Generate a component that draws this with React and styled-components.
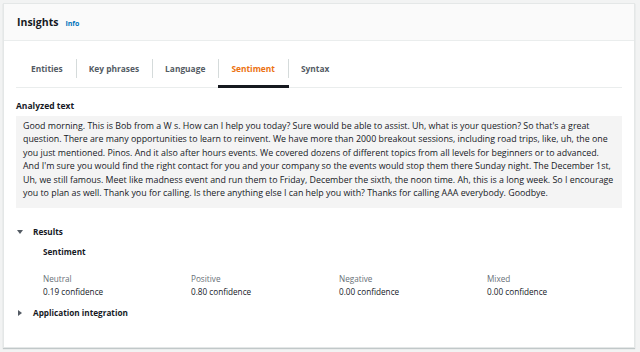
import styled, { createGlobalStyle } from "styled-components";

const GlobalStyle = createGlobalStyle`
  html, body {
    margin: 0;
    padding: 0;
    background: #f2f3f3;
  }
  body {
    font-family: "Open Sans", "Noto Sans", sans-serif;
    color: #16191f;
  }
`;

const Page = styled.div`
  padding: 3px 5px 4px 3px;
`;

const Card = styled.section`
  background: #fff;
  height: 345px;
  box-sizing: border-box;
  border: 1px solid #e4e7e7;
  box-shadow: 0 1px 1px 0 rgba(0, 28, 36, 0.2);
`;

const Header = styled.header`
  height: 37px;
  box-sizing: border-box;
  background: #fafafa;
  border-bottom: 1px solid #eaeded;
  padding: 11px 13px 0;
  display: flex;
  align-items: baseline;
  gap: 7px;
`;

const Title = styled.h2`
  margin: 0;
  font-size: 10.5px;
  font-weight: 700;
  color: #16191f;
`;

const InfoLink = styled.a`
  font-size: 7px;
  font-weight: 700;
  color: #0073bb;
  text-decoration: none;
`;

const Body = styled.div`
  padding: 0 12px;
`;

const TabList = styled.div`
  margin-top: 9px;
  display: flex;
  border-bottom: 1px solid #eaeded;
`;

const Tab = styled.div`
  position: relative;
  height: 37px;
  display: flex;
  align-items: center;
  padding: 0 13px 0 ${(p) => (p.$first ? "15px" : "13px")};
  font-size: 8.4px;
  font-weight: 700;
  color: ${(p) => (p.$active ? "#ec7211" : "#545b64")};

  &::before {
    content: "";
    display: ${(p) => (p.$first ? "none" : "block")};
    position: absolute;
    left: 0;
    top: 9px;
    height: 19px;
    width: 1px;
    background: #d5dbdb;
  }

  &::after {
    content: "";
    display: ${(p) => (p.$active ? "block" : "none")};
    position: absolute;
    left: 0;
    right: -1px;
    bottom: -1px;
    height: 3px;
    background: #16191f;
  }
`;

const FieldLabel = styled.div`
  margin-top: 12px;
  font-size: 8.5px;
  font-weight: 700;
  line-height: 12px;
  color: #16191f;
`;

const TextBox = styled.div`
  margin-top: 4px;
  background: #f4f4f4;
  padding: 4px 8px 7.6px 7px;
  font-size: 8.85px;
  line-height: 13.4px;
  color: #16191f;
`;

const TextLine = styled.span`
  display: block;
  white-space: nowrap;
`;

const Section = styled.div`
  margin-top: ${(p) => p.$top || "0px"};
`;

const Toggle = styled.div`
  display: flex;
  align-items: center;
  gap: 10px;
  padding-left: 1px;
  font-size: 8.2px;
  font-weight: 700;
  line-height: 12px;
  color: #16191f;
`;

const Caret = styled.svg`
  width: 6px;
  height: 6px;
  fill: #545b64;
  flex: none;
`;

const Panel = styled.div`
  padding-left: 27px;
`;

const PanelTitle = styled.div`
  margin-top: 8px;
  font-size: 8.2px;
  font-weight: 700;
  line-height: 12px;
`;

const Stats = styled.div`
  margin-top: 14px;
  display: grid;
  grid-template-columns: repeat(4, 148px);
`;

const StatLabel = styled.div`
  font-size: 8.2px;
  line-height: 13px;
  color: #687078;
`;

const StatValue = styled.div`
  font-size: 8.2px;
  line-height: 13px;
  color: #16191f;
`;

const tabs = ["Entities", "Key phrases", "Language", "Sentiment", "Syntax"];

const stats = [
  ["Neutral", "0.19 confidence"],
  ["Positive", "0.80 confidence"],
  ["Negative", "0.00 confidence"],
  ["Mixed", "0.00 confidence"],
];

// line breaks as they fall in the original text area
const transcript = [
  "Good morning. This is Bob from a W s. How can I help you today? Sure would be able to assist. Uh, what is your question? So that's a great",
  "question. There are many opportunities to learn to reinvent. We have more than 2000 breakout sessions, including road trips, like, uh, the one",
  "you just mentioned. Pinos. And it also after hours events. We covered dozens of different topics from all levels for beginners or to advanced.",
  "And I'm sure you would find the right contact for you and your company so the events would stop them there Sunday night. The December 1st,",
  "Uh, we still famous. Meet like madness event and run them to Friday, December the sixth, the noon time. Ah, this is a long week. So I encourage",
  "you to plan as well. Thank you for calling. Is there anything else I can help you with? Thanks for calling AAA everybody. Goodbye.",
];

function CaretDown() {
  return (
    <Caret viewBox="0 0 6 6">
      <polygon points="0,1 6,1 3,5" />
    </Caret>
  );
}

function CaretRight() {
  return (
    <Caret viewBox="0 0 6 6">
      <polygon points="1,0 5,3 1,6" />
    </Caret>
  );
}

export default function App() {
  return (
    <>
      <GlobalStyle />
      <Page>
        <Card>
          <Header>
            <Title>Insights</Title>
            <InfoLink href="#">Info</InfoLink>
          </Header>
          <Body>
            <TabList>
              {tabs.map((t, i) => (
                <Tab key={t} $first={i === 0} $active={t === "Sentiment"}>
                  {t}
                </Tab>
              ))}
            </TabList>

            <FieldLabel>Analyzed text</FieldLabel>
            <TextBox>
              {transcript.map((line) => (
                <TextLine key={line}>{line}</TextLine>
              ))}
            </TextBox>

            <Section $top="18px">
              <Toggle>
                <CaretDown />
                Results
              </Toggle>
              <Panel>
                <PanelTitle>Sentiment</PanelTitle>
                <Stats>
                  {stats.map(([label, value]) => (
                    <div key={label}>
                      <StatLabel>{label}</StatLabel>
                      <StatValue>{value}</StatValue>
                    </div>
                  ))}
                </Stats>
              </Panel>
            </Section>

            <Section $top="9px">
              <Toggle>
                <CaretRight />
                Application integration
              </Toggle>
            </Section>
          </Body>
        </Card>
      </Page>
    </>
  );
}
